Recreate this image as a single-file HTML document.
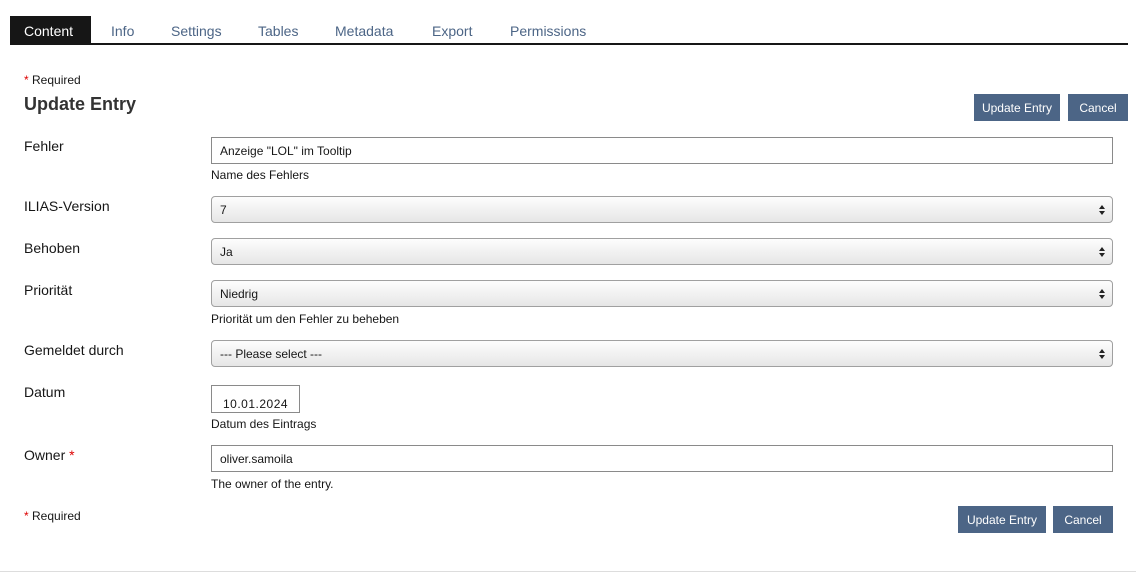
<!DOCTYPE html>
<html><head><meta charset="utf-8"><style>
body{margin:0;width:1136px;height:572px;background:#fff;font-family:"Liberation Sans",sans-serif;color:#161616;position:relative;overflow:hidden}
.a{position:absolute}
.tab{position:absolute;top:16px;height:28px;line-height:30px;font-size:14px;color:#4c6586}
.lbl{position:absolute;left:24px;font-size:14px;color:#161616}
.help{position:absolute;left:211px;font-size:12px;color:#161616}
.inp{position:absolute;left:211px;font-size:12px;line-height:27px;padding-left:8px;box-sizing:border-box;width:902px;height:27px;border:1px solid #8a8a8a}
.sel{position:absolute;left:211px;width:902px;height:27px;box-sizing:border-box;border:1px solid #a0a0a0;border-radius:4px;background:linear-gradient(#fdfdfd,#e6e6e6);font-size:12px;line-height:27px;padding-left:8px}
.sel:after{content:"";position:absolute;right:7px;top:8px;width:0;height:0;border-left:3px solid transparent;border-right:3px solid transparent;border-bottom:4px solid #222}
.sel:before{content:"";position:absolute;right:7px;top:14px;width:0;height:0;border-left:3px solid transparent;border-right:3px solid transparent;border-top:4px solid #222}
.btn{position:absolute;background:#4c6586;color:#fff;font-size:12px;text-align:center;line-height:28px;height:27px}
.r{color:#d00}
</style></head><body>
<div class="a" style="left:10px;top:16px;width:81px;height:28px;background:#161616"></div>
<div class="tab" style="left:24px;color:#fff">Content</div>
<div class="tab" style="left:111px">Info</div>
<div class="tab" style="left:171px">Settings</div>
<div class="tab" style="left:258px">Tables</div>
<div class="tab" style="left:335px">Metadata</div>
<div class="tab" style="left:432px">Export</div>
<div class="tab" style="left:510px">Permissions</div>
<div class="a" style="left:10px;top:43px;width:1118px;height:2px;background:#161616"></div>

<div class="a" style="left:24px;top:73px;font-size:12px"><span class="r">*</span> Required</div>
<div class="a" style="left:24px;top:94px;font-size:18px;font-weight:bold;color:#333">Update Entry</div>
<div class="btn" style="left:974px;top:94px;width:86px">Update Entry</div>
<div class="btn" style="left:1068px;top:94px;width:60px">Cancel</div>

<div class="lbl" style="top:138px">Fehler</div>
<div class="inp" style="top:137px">Anzeige "LOL" im Tooltip</div>
<div class="help" style="top:168px">Name des Fehlers</div>

<div class="lbl" style="top:198px">ILIAS-Version</div>
<div class="sel" style="top:196px">7</div>

<div class="lbl" style="top:240px">Behoben</div>
<div class="sel" style="top:238px">Ja</div>

<div class="lbl" style="top:282px">Priorität</div>
<div class="sel" style="top:280px">Niedrig</div>
<div class="help" style="top:312px">Priorität um den Fehler zu beheben</div>

<div class="lbl" style="top:342px">Gemeldet durch</div>
<div class="sel" style="top:340px">--- Please select ---</div>

<div class="lbl" style="top:384px">Datum</div>
<div class="a" style="left:211px;top:385px;width:89px;height:28px;box-sizing:border-box;border:1px solid #8a8a8a;font-size:12px;padding:11px 0 0 11px;letter-spacing:0.5px">10.01.2024</div>
<div class="help" style="top:417px">Datum des Eintrags</div>

<div class="lbl" style="top:447px">Owner <span class="r">*</span></div>
<div class="inp" style="top:445px">oliver.samoila</div>
<div class="help" style="top:477px">The owner of the entry.</div>

<div class="a" style="left:24px;top:509px;font-size:12px"><span class="r">*</span> Required</div>
<div class="btn" style="left:958px;top:506px;width:88px">Update Entry</div>
<div class="btn" style="left:1053px;top:506px;width:60px">Cancel</div>
<div class="a" style="left:0;top:571px;width:1136px;height:1px;background:#ddd"></div>
</body></html>
